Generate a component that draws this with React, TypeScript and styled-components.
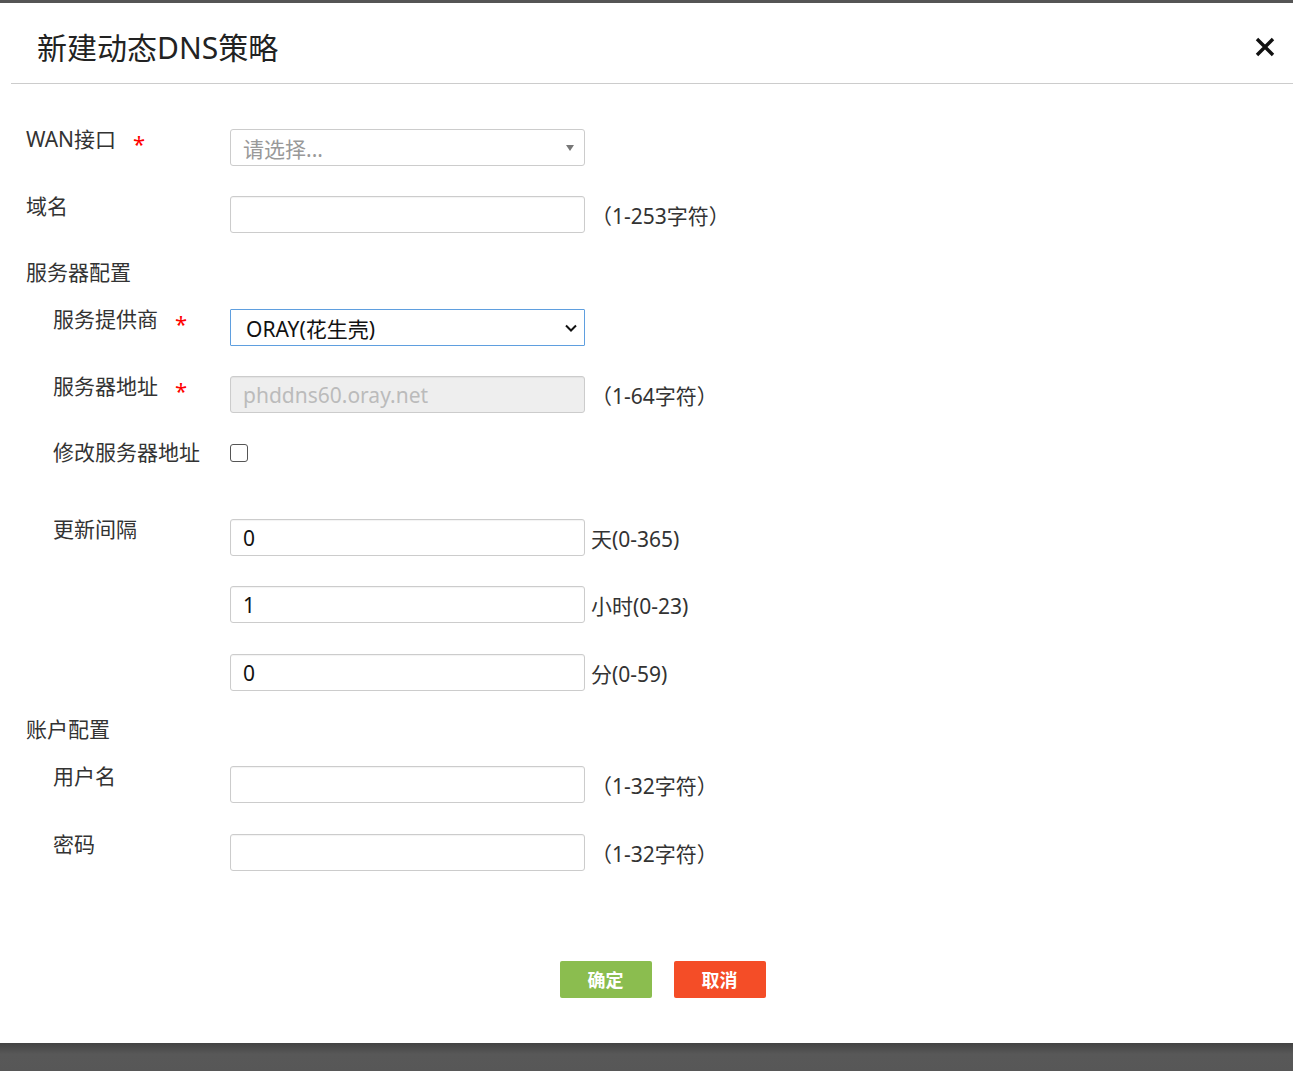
import styled, { createGlobalStyle } from "styled-components";

const GlobalStyle = createGlobalStyle`
  html, body {
    margin: 0;
    padding: 0;
    background: #fff;
  }
  body {
    font-family: "Noto Sans", "Noto Sans CJK SC", sans-serif;
    color: #333;
  }
`;

const Page = styled.div`
  min-height: 100vh;
  display: flex;
  flex-direction: column;
  border-top: 3px solid #555;
  box-sizing: border-box;
`;

const Dialog = styled.div`
  flex: 1;
  display: flex;
  flex-direction: column;
`;

const Header = styled.header`
  height: 80px;
  margin-left: 11px;
  border-bottom: 1px solid #ccc;
  display: flex;
  align-items: center;
  justify-content: space-between;
  padding: 0 16px 0 26px;
`;

const Title = styled.h1`
  margin: 0;
  font-family: "Noto Sans", "Noto Sans CJK SC", sans-serif;
  font-weight: 400;
  font-size: 30px;
  line-height: 36px;
  color: #222;
  padding-top: 10px;
`;

const CloseButton = styled.button`
  border: none;
  background: none;
  padding: 0;
  width: 24px;
  height: 24px;
  margin-top: 8px;
  cursor: pointer;
  display: flex;
  align-items: center;
  justify-content: center;
`;

const Form = styled.form`
  display: flex;
  flex-direction: column;
  padding: 45px 0 0 26px;
`;

const Row = styled.div<{ $mt?: number }>`
  display: flex;
  align-items: flex-start;
  min-height: 37px;
  margin-top: ${(p) => p.$mt ?? 30}px;
`;

const Label = styled.div<{ $indent?: boolean }>`
  width: ${(p) => (p.$indent ? 177 : 204)}px;
  padding-left: ${(p) => (p.$indent ? 27 : 0)}px;
  font-size: 21px;
  line-height: 20px;
  color: #333;
  display: flex;
  align-items: center;
  white-space: nowrap;
`;

const Star = styled.span`
  color: #f00;
  font-size: 22px;
  margin-left: 17px;
  position: relative;
  top: 4px;
`;

const SectionTitle = styled.div<{ $mt: number }>`
  font-size: 21px;
  line-height: 28px;
  margin-top: ${(p) => p.$mt}px;
  color: #333;
`;

const Field = styled.div`
  display: flex;
  align-items: center;
  height: 37px;
`;

const TextInput = styled.input<{ $disabled?: boolean }>`
  box-sizing: border-box;
  width: 355px;
  height: 37px;
  border: 1px solid #ccc;
  border-radius: 3px;
  padding: 0 12px;
  font-family: "Noto Sans", "Noto Sans CJK SC", sans-serif;
  font-size: 21px;
  color: #111;
  background: ${(p) => (p.$disabled ? "#eee" : "#fff")};
  box-shadow: inset 0 1px 1px rgba(0, 0, 0, 0.05);
  outline: none;

  &::placeholder {
    color: #bbb;
  }
`;

const SelectBox = styled.div<{ $focused?: boolean }>`
  box-sizing: border-box;
  width: 355px;
  height: 37px;
  border: 1px solid ${(p) => (p.$focused ? "#5f9fdf" : "#ccc")};
  border-radius: ${(p) => (p.$focused ? 1 : 3)}px;
  padding: 0 ${(p) => (p.$focused ? 6 : 9)}px 0 ${(p) => (p.$focused ? 15 : 12)}px;
  display: flex;
  align-items: center;
  justify-content: space-between;
  font-size: 21px;
  background: #fff;
`;

const SelectText = styled.span<{ $placeholder?: boolean }>`
  color: ${(p) => (p.$placeholder ? "#999" : "#111")};
`;

const Hint = styled.span`
  margin-left: 6px;
  font-size: 21px;
  color: #333;
  white-space: nowrap;
`;

const Checkbox = styled.input`
  appearance: none;
  margin: 2px 0 0 0;
  width: 18px;
  height: 18px;
  border: 1.5px solid #555;
  border-radius: 3px;
  background: #fff;
  box-sizing: border-box;
`;

const ButtonBar = styled.div`
  display: flex;
  justify-content: center;
  gap: 22px;
  margin-top: 90px;
  padding-left: 6px;
`;

const Button = styled.button<{ $color: string }>`
  width: 92px;
  height: 37px;
  border: none;
  border-radius: 2px;
  background: ${(p) => p.$color};
  color: #fff;
  font-family: "Noto Sans CJK SC", sans-serif;
  font-weight: 700;
  font-size: 18px;
  line-height: 1;
  padding: 0 0 2px;
  cursor: pointer;
`;

const BottomBar = styled.div`
  height: 28px;
  background: linear-gradient(#434343, #585858 40%, #575757);
`;

const Triangle = () => (
  <svg width="10" height="8" viewBox="0 0 10 8">
    <path d="M1 1 L9 1 L5 7 Z" fill="#777" />
  </svg>
);

const Chevron = () => (
  <svg width="14" height="10" viewBox="0 0 14 10">
    <path d="M2 2.5 L7 7.5 L12 2.5" fill="none" stroke="#111" strokeWidth="2" />
  </svg>
);

export default function App() {
  return (
    <Page>
      <GlobalStyle />
      <Dialog>
        <Header>
          <Title>新建动态DNS策略</Title>
          <CloseButton type="button" aria-label="关闭">
            <svg width="20" height="20" viewBox="0 0 20 20">
              <path d="M2 2 L18 18 M18 2 L2 18" stroke="#111" strokeWidth="3.4" />
            </svg>
          </CloseButton>
        </Header>

        <Form onSubmit={(e) => e.preventDefault()}>
          <Row $mt={0}>
            <Label>
              WAN接口<Star>*</Star>
            </Label>
            <Field>
              <SelectBox>
                <SelectText $placeholder>请选择...</SelectText>
                <Triangle />
              </SelectBox>
            </Field>
          </Row>

          <Row>
            <Label>域名</Label>
            <Field>
              <TextInput />
              <Hint>（1-253字符）</Hint>
            </Field>
          </Row>

          <SectionTitle $mt={25}>服务器配置</SectionTitle>

          <Row $mt={23}>
            <Label $indent>
              服务提供商<Star>*</Star>
            </Label>
            <Field>
              <SelectBox $focused>
                <SelectText>ORAY(花生壳)</SelectText>
                <Chevron />
              </SelectBox>
            </Field>
          </Row>

          <Row>
            <Label $indent>
              服务器地址<Star>*</Star>
            </Label>
            <Field>
              <TextInput $disabled disabled placeholder="phddns60.oray.net" />
              <Hint>（1-64字符）</Hint>
            </Field>
          </Row>

          <Row $mt={29}>
            <Label $indent>修改服务器地址</Label>
            <Checkbox type="checkbox" />
          </Row>

          <Row $mt={40}>
            <Label $indent>更新间隔</Label>
            <Field>
              <TextInput defaultValue="0" />
              <Hint>天(0-365)</Hint>
            </Field>
          </Row>

          <Row>
            <Label $indent />
            <Field>
              <TextInput defaultValue="1" />
              <Hint>小时(0-23)</Hint>
            </Field>
          </Row>

          <Row $mt={31}>
            <Label $indent />
            <Field>
              <TextInput defaultValue="0" />
              <Hint>分(0-59)</Hint>
            </Field>
          </Row>

          <SectionTitle $mt={24}>账户配置</SectionTitle>

          <Row $mt={23}>
            <Label $indent>用户名</Label>
            <Field>
              <TextInput />
              <Hint>（1-32字符）</Hint>
            </Field>
          </Row>

          <Row $mt={31}>
            <Label $indent>密码</Label>
            <Field>
              <TextInput type="password" />
              <Hint>（1-32字符）</Hint>
            </Field>
          </Row>

          <ButtonBar>
            <Button type="submit" $color="#8bbd4f">确定</Button>
            <Button type="button" $color="#f44d27">取消</Button>
          </ButtonBar>
        </Form>
      </Dialog>
      <BottomBar />
    </Page>
  );
}
